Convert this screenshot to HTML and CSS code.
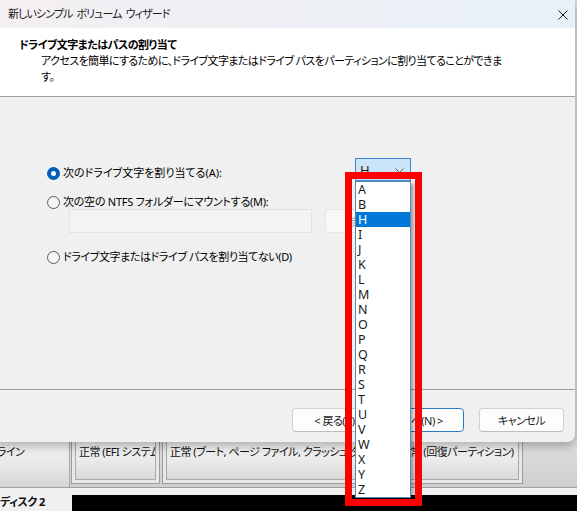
FILE: index.html
```html
<!DOCTYPE html>
<html lang="ja">
<head>
<meta charset="utf-8">
<title>新しいシンプル ボリューム ウィザード</title>
<link rel="stylesheet" href="styles.css">
</head>
<body>
<div class="screen">
  <div class="disk">
    <div class="disk-row online">
      <div class="disk-label"><span class="label-crop">オンライン</span></div>
      <div class="parts">
        <div class="part p1"><div class="part-in">正常 (EFI システム パーティション)</div></div>
        <div class="part p2"><div class="part-in">正常 (ブート, ページ ファイル, クラッシュ ダンプ, ベーシック データ パーティション)</div></div>
        <div class="part p3"><div class="part-in">正常 (回復パーティション)</div></div>
      </div>
    </div>
    <div class="disk-row disk2">
      <div class="disk-label strong">ディスク 2</div>
      <div class="disk-bar"></div>
    </div>
  </div>

  <div class="dialog">
    <div class="titlebar">
      <span class="title">新しいシンプル ボリューム ウィザード</span>
      <svg class="close" width="10" height="10" viewBox="0 0 10 10"><path d="M0.5 0.5 L9.5 9.5 M9.5 0.5 L0.5 9.5" stroke="#1a1a1a" stroke-width="1" fill="none"/></svg>
    </div>
    <div class="header">
      <div class="header-title">ドライブ文字またはパスの割り当て</div>
      <div class="header-desc">アクセスを簡単にするために、ドライブ文字またはドライブ パスをパーティションに割り当てることができま<br>す。</div>
    </div>
    <div class="content">
      <div class="row-first">
        <label class="option first-label"><span class="radio checked"></span>次のドライブ文字を割り当てる(A):</label>
        <div class="combo"><span>H</span><svg width="9" height="5" viewBox="0 0 9 5"><path d="M0.5 0.5 L4.5 4.5 L8.5 0.5" stroke="#5f5f5f" stroke-width="1" fill="none"/></svg></div>
      </div>
      <label class="option second-label"><span class="radio"></span>次の空の NTFS フォルダーにマウントする(M):</label>
      <div class="folder-row">
        <div class="textbox"></div>
        <div class="browse">参照(R)...</div>
      </div>
      <label class="option third-label"><span class="radio"></span>ドライブ文字またはドライブ パスを割り当てない(D)</label>
    </div>
    <div class="footer">
      <div class="btn">&lt; 戻る(B)</div>
      <div class="btn default">次へ(N) &gt;</div>
      <div class="btn cancel">キャンセル</div>
    </div>
  </div>

  <ul class="droplist">
    <li>A</li><li>B</li><li class="sel">H</li><li>I</li><li>J</li><li>K</li><li>L</li><li>M</li><li>N</li><li>O</li><li>P</li><li>Q</li><li>R</li><li>S</li><li>T</li><li>U</li><li>V</li><li>W</li><li>X</li><li>Y</li><li>Z</li>
  </ul>
  <div class="highlight"></div>
</div>
</body>
</html>
```

FILE: styles.css
```css
html, body {
  margin: 0;
  padding: 0;
  width: 577px;
  height: 511px;
  overflow: hidden;
}
body {
  font-family: "Noto Sans", "Noto Sans CJK JP", sans-serif;
  font-size: 11px;
  letter-spacing: -0.5px;
  font-feature-settings: "palt" 1;
  color: #000;
}
.screen {
  position: relative;
  width: 577px;
  height: 511px;
  background: #d9d9d9;
  overflow: hidden;
}

/* background: disk management */
.disk {
  height: 511px;
  display: flex;
  flex-direction: column;
  justify-content: flex-end;
}
.disk-row {
  display: flex;
}
.online {
  height: 47px;
  border-bottom: 1px solid #a0a0a0;
  background: linear-gradient(180deg, #dedede, #cfcfcf);
}
.disk2 {
  height: 23px;
  background: #f0f0f0;
}
.disk-label {
  width: 70px;
  flex: none;
  box-sizing: border-box;
  border-right: 1px solid #a8a8a8;
  padding-top: 4px;
  line-height: 16px;
  overflow: hidden;
  white-space: nowrap;
  color: #111;
  background: linear-gradient(180deg, #f4f4f4 0%, #e6e6e6 60%, #d4d4d4 100%);
}
.label-crop {
  display: inline-block;
  margin-left: -22px;
}
.strong {
  font-weight: bold;
  padding-top: 6px;
  background: #f0f0f0;
  border-right: none;
}
.parts {
  display: flex;
  margin-left: 1px;
  gap: 2px;
}
.part {
  height: 44px;
  box-sizing: border-box;
  border: 1px solid #9c9c9c;
  border-top: none;
  padding: 0 3px 3px 3px;
  background: #e8e8e8;
}
.part-in {
  height: 40px;
  box-sizing: border-box;
  border: 1px solid #a9a9a9;
  border-top: none;
  padding: 4px 3px 0;
  line-height: 16px;
  white-space: nowrap;
  overflow: hidden;
  color: #111;
  background: linear-gradient(180deg, #f2f2f2 0%, #ebebeb 50%, #d9d9d9 100%);
}
.p1 { width: 89px; }
.p2 { width: 228px; }
.p3 { width: 131px; }
.disk-bar {
  flex: 1;
  margin: 7px 0 0 2px;
  background: #000;
}

/* dialog */
.dialog {
  position: absolute;
  left: -8px;
  top: 0;
  width: 583px;
  height: 442px;
  display: flex;
  flex-direction: column;
  background: #f0f0f0;
  border-radius: 0 0 8px 8px;
  box-shadow: 0 4px 10px rgba(0, 0, 0, 0.28);
  overflow: hidden;
}
.titlebar {
  height: 28px;
  flex: none;
  display: flex;
  align-items: center;
  justify-content: space-between;
  padding: 0 7px 0 16px;
  background: linear-gradient(90deg, #f4eff2 0%, #eef0f5 50%, #e8f1f8 100%);
}
.title {
  color: #1b1b1b;
  line-height: 16px;
  letter-spacing: -0.9px;
  word-spacing: 2px;
}
.close {
  display: block;
  margin-top: 1px;
}
.header {
  height: 69px;
  flex: none;
  box-sizing: border-box;
  background: #fff;
  border-bottom: 1px solid #a0a0a0;
  padding: 9px 0 0 27px;
  line-height: 16px;
}
.header-title {
  font-weight: bold;
  letter-spacing: -0.5px;
}
.header-desc {
  padding-left: 22px;
  letter-spacing: -0.6px;
}
.content {
  flex: 1;
  display: flex;
  flex-direction: column;
  align-items: flex-start;
  padding: 61px 0 0 54px;
}
.row-first {
  display: grid;
  grid-template-columns: 309px 56px;
  height: 24px;
}
.option {
  display: flex;
  align-items: center;
  gap: 2px;
  line-height: 16px;
  white-space: nowrap;
}
.first-label { margin-top: 7px; align-self: start; letter-spacing: 0; }
.second-label { margin-top: 12px; letter-spacing: -0.25px; }
.third-label { margin-top: 16px; letter-spacing: -0.4px; }
.radio {
  width: 13px;
  height: 13px;
  box-sizing: border-box;
  border-radius: 50%;
  border: 1px solid #5d5d5d;
  background: #f6f6f6;
  flex: none;
  margin-left: 1px;
  margin-right: 1px;
}
.radio.checked {
  border: 4px solid #005fb8;
  background: #fff;
}
.combo {
  height: 23px;
  box-sizing: border-box;
  border: 1px solid #3b86d0;
  background: #cce4f7;
  display: flex;
  align-items: center;
  justify-content: space-between;
  padding: 0 6px 0 4px;
  font-size: 13px;
  letter-spacing: 0;
  color: #1a1a1a;
}
.combo svg { display: block; margin-top: 1px; }
.folder-row {
  display: flex;
  gap: 13px;
  margin: -1px 0 0 23px;
}
.textbox {
  width: 243px;
  height: 24px;
  box-sizing: border-box;
  border: 1px solid #e2e2e2;
  background: #f3f3f3;
}
.browse {
  width: 85px;
  height: 24px;
  box-sizing: border-box;
  border: 1px solid #e6e6e6;
  border-radius: 4px;
  background: #f8f8f8;
  color: #a3a3a3;
  display: flex;
  align-items: center;
  justify-content: center;
}
.footer {
  height: 53px;
  flex: none;
  box-sizing: border-box;
  border-top: 1px solid #a0a0a0;
  display: flex;
  justify-content: flex-end;
  align-items: flex-start;
  padding: 18px 11px 0 0;
}
.btn {
  width: 85px;
  height: 24px;
  box-sizing: border-box;
  border: 1px solid #d0d0d0;
  border-bottom-color: #bdbdbd;
  border-radius: 4px;
  background: #fdfdfd;
  display: flex;
  align-items: center;
  justify-content: center;
  color: #1a1a1a;
  margin-left: 2px;
}
.btn.default {
  border: 1px solid #2b7ac4;
}
.btn.cancel {
  margin-left: 15px;
}

/* popup list */
.droplist {
  position: absolute;
  left: 355px;
  top: 181px;
  width: 56px;
  margin: 0;
  padding: 0;
  list-style: none;
  box-sizing: border-box;
  border: 1px solid #5a86b4;
  background: #fff;
  box-shadow: 3px 3px 3px rgba(0, 0, 0, 0.3);
  font-size: 12.5px;
  letter-spacing: 0;
}
.droplist li {
  height: 15px;
  line-height: 15px;
  padding-left: 2px;
  color: #1a1a1a;
}
.droplist li.sel {
  background: #0078d7;
  color: #fff;
}
.highlight {
  position: absolute;
  left: 345px;
  top: 172px;
  width: 77px;
  height: 334px;
  box-sizing: border-box;
  border: 7px solid #ff0000;
}
```
